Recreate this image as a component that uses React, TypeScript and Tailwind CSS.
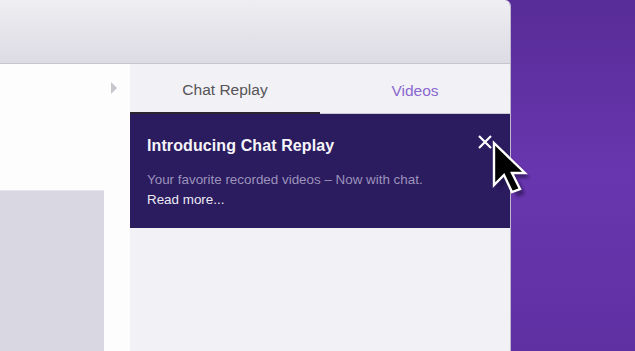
import React from "react";

const Cursor = () => (
    <svg
        className="absolute left-[490px] top-[139px]"
        width="54"
        height="66"
        viewBox="0 0 54 66"
    >
        <defs>
            <filter id="cursorShadow" x="-30%" y="-30%" width="160%" height="160%">
                <feGaussianBlur stdDeviation="1.8" />
            </filter>
        </defs>
        <path
            d="M9 9 L9 51 L19 41 L27 58 L35 55 L27 39 L40 39 Z"
            fill="#1c0f3c"
            opacity="0.55"
            filter="url(#cursorShadow)"
        />
        <path
            d="M4 4 L4 46 L14 36 L22 53 L30 50 L22 34 L35 34 Z"
            fill="#000"
            stroke="#fff"
            strokeWidth="2.4"
            strokeLinejoin="miter"
        />
    </svg>
);

const App = () => {
    return (
        <div
            className="relative w-[635px] h-[351px] overflow-hidden flex bg-gradient-to-b from-[#582c98] via-[#6836ae] to-[#5f30a2]"
            style={{ fontFamily: '"Liberation Sans", Arial, sans-serif' }}
        >
            <div className="w-[511px] h-full flex flex-col rounded-tr-[6px] overflow-hidden border-r border-[#bdb8cc]">
                <div className="h-[64px] shrink-0 bg-gradient-to-b from-[#efeef2] to-[#dddbe4] border-b border-[#c6c4cf]" />

                <div className="flex-1 flex">
                    <div className="w-[130px] shrink-0 bg-[#fdfdfe] flex flex-col">
                        <div className="h-[126px] flex justify-end pr-[13px] pt-[18px]">
                            <div className="w-0 h-0 border-y-[6px] border-y-transparent border-l-[6px] border-l-[#c6c6cb]" />
                        </div>
                        <div className="w-[104px] flex-1 bg-[#d9d7e2] border-t border-[#e6e5ec]" />
                    </div>

                    <div className="flex-1 flex flex-col bg-[#f2f1f6]">
                        <div className="h-[50px] flex text-[15.5px]">
                            <div className="w-[190px] flex items-center justify-center text-[#565458] border-b-2 border-[#2a2630] pt-[4px]">
                                Chat Replay
                            </div>
                            <div className="flex-1 flex items-center justify-center text-[#8a68cf] border-b border-[#cbc9d3] pt-[4px]">
                                Videos
                            </div>
                        </div>

                        <div className="h-[114px] bg-[#2b1b5f] pl-[17px] pr-[17px] pt-[20px] relative">
                            <div className="text-[16px] leading-[24px] font-bold text-[#f6f5fa] tracking-[0.1px]">
                                Introducing Chat Replay
                            </div>
                            <div className="mt-[12px] text-[13.4px] leading-[20px] text-[#9c93bb]">
                                Your favorite recorded videos – Now with chat.
                            </div>
                            <div className="text-[13.4px] leading-[20px] text-[#eceaf3]">
                                Read more...
                            </div>
                            <svg
                                className="absolute left-[348px] top-[21px]"
                                width="14"
                                height="14"
                                viewBox="0 0 14 14"
                            >
                                <path d="M1 1 L13 13 M13 1 L1 13" stroke="#fff" strokeWidth="2.2" />
                            </svg>
                        </div>

                        <div className="flex-1" />
                    </div>
                </div>
            </div>

            <Cursor />
        </div>
    );
};

export default App;
